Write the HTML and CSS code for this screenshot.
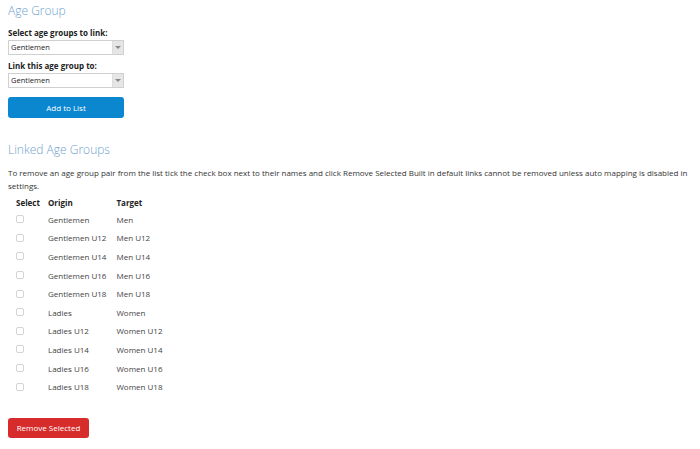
FILE: index.html
```html
<!DOCTYPE html>
<html lang="en">
<head>
    <meta charset="UTF-8">
    <title>Age Group Links</title>
<link rel="stylesheet" href="styles.css">
</head>
<body>
    <section class="panel">
        <h2 class="panel-title">Age Group</h2>
        <label class="field-label" for="origin">Select age groups to link:</label>
        <div class="select-box">
            <span class="select-value">Gentlemen</span>
            <span class="select-arrow"></span>
        </div>
        <label class="field-label" for="target">Link this age group to:</label>
        <div class="select-box">
            <span class="select-value">Gentlemen</span>
            <span class="select-arrow"></span>
        </div>
        <button class="btn btn-blue">Add to List</button>
    </section>

    <section class="panel">
        <h2 class="panel-title linked">Linked Age Groups</h2>
        <p class="help">To remove an age group pair from the list tick the check box next to their names and click Remove Selected Built in default links cannot be removed unless auto mapping is disabled in settings.</p>
        <table class="links">
            <thead>
                <tr><th class="col-select">Select</th><th class="col-origin">Origin</th><th>Target</th></tr>
            </thead>
            <tbody>
                <tr><td class="cell-check"><span class="check"></span></td><td>Gentlemen</td><td>Men</td></tr>
                <tr><td class="cell-check"><span class="check"></span></td><td>Gentlemen U12</td><td>Men U12</td></tr>
                <tr><td class="cell-check"><span class="check"></span></td><td>Gentlemen U14</td><td>Men U14</td></tr>
                <tr><td class="cell-check"><span class="check"></span></td><td>Gentlemen U16</td><td>Men U16</td></tr>
                <tr><td class="cell-check"><span class="check"></span></td><td>Gentlemen U18</td><td>Men U18</td></tr>
                <tr><td class="cell-check"><span class="check"></span></td><td>Ladies</td><td>Women</td></tr>
                <tr><td class="cell-check"><span class="check"></span></td><td>Ladies U12</td><td>Women U12</td></tr>
                <tr><td class="cell-check"><span class="check"></span></td><td>Ladies U14</td><td>Women U14</td></tr>
                <tr><td class="cell-check"><span class="check"></span></td><td>Ladies U16</td><td>Women U16</td></tr>
                <tr><td class="cell-check"><span class="check"></span></td><td>Ladies U18</td><td>Women U18</td></tr>
            </tbody>
        </table>
        <button class="btn btn-red">Remove Selected</button>
    </section>
</body>
</html>
```
FILE: styles.css
```css
/* General Styles */
body {
    font-family: "Open Sans", Arial, sans-serif;
    margin: 0;
    padding: 0 8px;
    color: #333333;
    background-color: #ffffff;
    font-size: 8px;
}

.panel-title {
    font-family: "Open Sans", Arial, sans-serif;
    font-weight: 300;
    font-size: 12px;
    color: #6f9fcc;
    margin: 2px 0 7px 0;
    line-height: 18px;
}

.panel-title.linked {
    margin: 0 0 7px 0;
}

.field-label {
    display: block;
    font-weight: 700;
    font-size: 8px;
    color: #222222;
    line-height: 12px;
    margin-bottom: 1px;
}

/* fake select */
.select-box {
    display: flex;
    width: 116px;
    height: 15px;
    box-sizing: border-box;
    border: 1px solid #d0d0d0;
    margin-bottom: 5px;
}

.select-value {
    flex: 1;
    padding-left: 2px;
    line-height: 13px;
    font-size: 7.5px;
    color: #222222;
}

.select-arrow {
    width: 10px;
    background-color: #e6e6e6;
    border-left: 1px solid #dddddd;
    position: relative;
}

.select-arrow::after {
    content: "";
    position: absolute;
    left: 2px;
    top: 5px;
    border-left: 3px solid transparent;
    border-right: 3px solid transparent;
    border-top: 3px solid #888888;
}

.btn {
    display: block;
    font-family: "Open Sans", Arial, sans-serif;
    font-size: 8px;
    color: #ffffff;
    border: none;
    border-radius: 3px;
    cursor: pointer;
    padding: 0;
}

.btn-blue {
    background-color: #0a87cf;
    width: 116px;
    height: 21px;
    margin-top: 9px;
    margin-bottom: 23px;
}

.btn-red {
    background-color: #d62c2c;
    width: 81px;
    height: 20px;
    margin-top: 22px;
}

.help {
    margin: 0 0 4px 0;
    line-height: 13px;
    color: #333333;
}

/* table */
.links {
    border-collapse: collapse;
    margin-left: 3px;
}

.links th {
    text-align: left;
    font-weight: 700;
    color: #222222;
    padding: 1px 5px 2px 5px;
    line-height: 11px;
}

.links td {
    color: #444444;
    padding: 0 5px;
    height: 18.6px;
    white-space: nowrap;
}

.links th.col-select,
.links td.cell-check {
    width: 24px;
    padding-left: 5px;
    padding-right: 3px;
}

.col-origin {
    width: 57px;
}

.check {
    display: block;
    width: 6px;
    height: 6px;
    border: 1px solid #d4d4d4;
    border-radius: 2px;
}
```
